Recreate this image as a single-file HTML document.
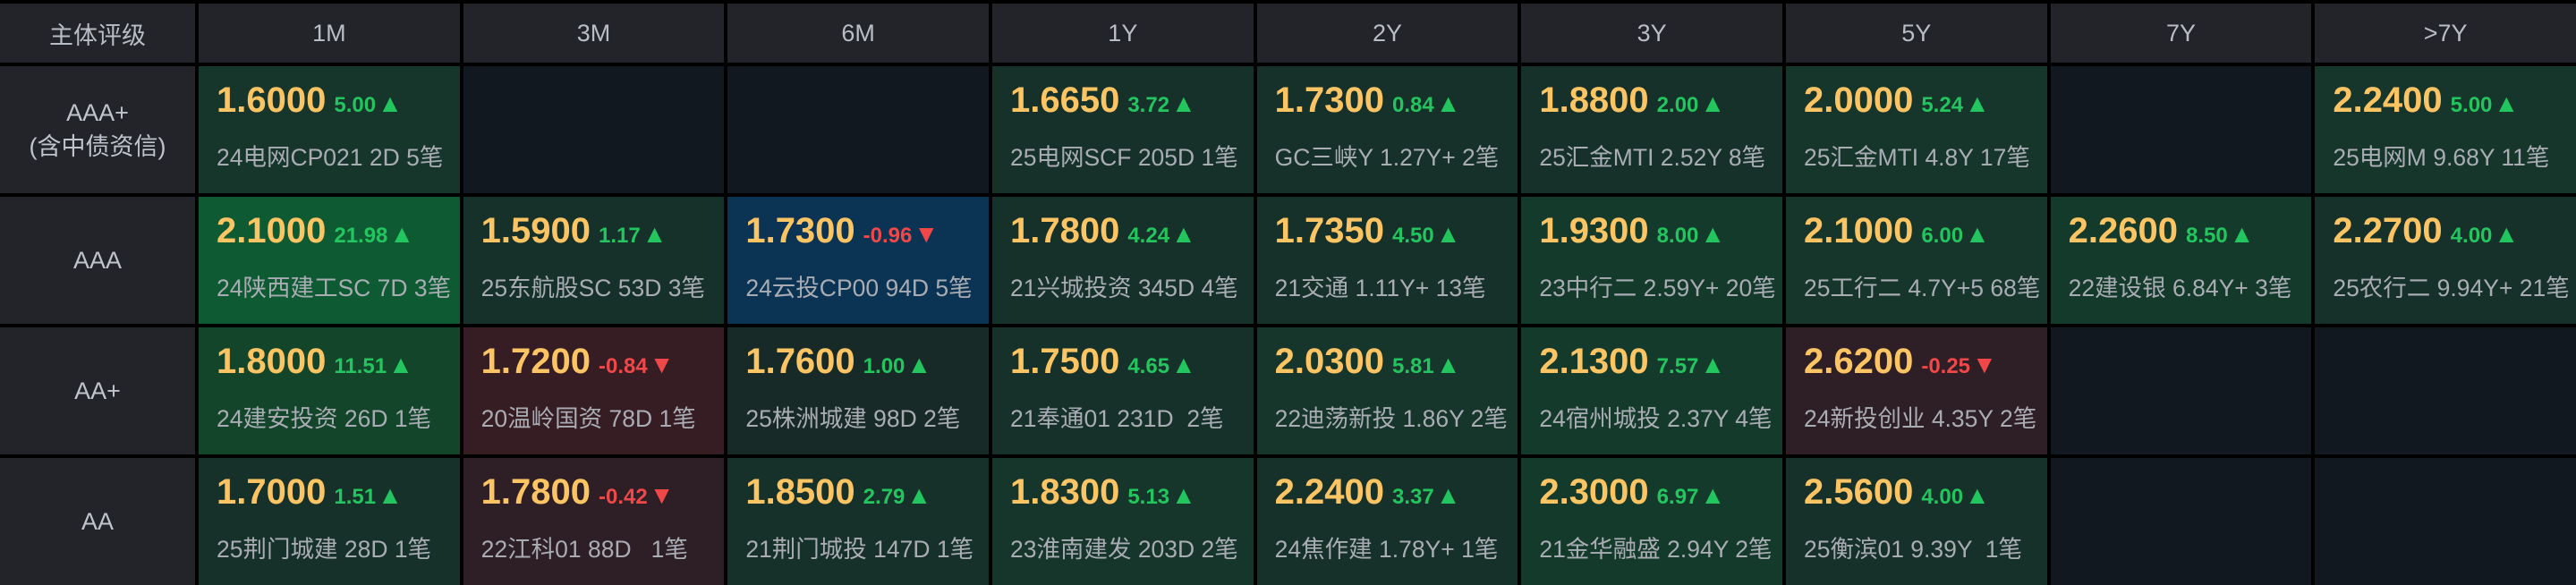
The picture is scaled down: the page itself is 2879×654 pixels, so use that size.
<!DOCTYPE html>
<html><head><meta charset="utf-8"><style>
*{margin:0;padding:0;box-sizing:border-box}
body{width:2879px;height:648px;background:#000;overflow:hidden;font-family:"Liberation Sans","Noto Sans CJK SC",sans-serif}
.g{display:grid;grid-template-columns:218px repeat(9,1fr);grid-template-rows:66px repeat(4,142px);gap:4px;padding-top:4px;width:2879px}
.h{background:#232429;color:#b9bdc5;font-size:27px;display:flex;align-items:center;justify-content:center}
.r{background:#232429;color:#c0c4cc;font-size:27px;display:flex;flex-direction:column;align-items:center;justify-content:center;line-height:38px;text-align:center}
.c{position:relative;background:#16302a;overflow:hidden}
.e{background:#121820}
.p{position:absolute;left:20px;top:18px;line-height:1;font-size:40px;font-weight:bold;color:#fcc463;white-space:nowrap}
.p span{font-size:24px;color:#22c55e;margin-left:9px}
.p span i{font-style:normal;font-size:28px;margin-left:2px}
.p span.d{color:#f04848}
.s{position:absolute;left:20px;top:89px;line-height:1;font-size:26.5px;color:#a9adb3;white-space:nowrap}
.g1{background:#0e5a33}.g2{background:#12452a}.g3{background:#143a2c}.g4{background:#16352b}.g0{background:#182a28}
.b{background:#0b3354}.r1{background:#361d24}.r2{background:#2e1e25}
</style></head><body><div class="g">
<div class="h">主体评级</div><div class="h">1M</div><div class="h">3M</div><div class="h">6M</div><div class="h">1Y</div><div class="h">2Y</div><div class="h">3Y</div><div class="h">5Y</div><div class="h">7Y</div><div class="h">&gt;7Y</div>

<div class="r"><div>AAA+</div><div>(含中债资信)</div></div>
<div class="c g4"><div class="p">1.6000<span>5.00<i>▲</i></span></div><div class="s">24电网CP021 2D 5笔</div></div>
<div class="c e"></div><div class="c e"></div>
<div class="c"><div class="p">1.6650<span>3.72<i>▲</i></span></div><div class="s">25电网SCF 205D 1笔</div></div>
<div class="c"><div class="p">1.7300<span>0.84<i>▲</i></span></div><div class="s">GC三峡Y 1.27Y+ 2笔</div></div>
<div class="c"><div class="p">1.8800<span>2.00<i>▲</i></span></div><div class="s">25汇金MTI 2.52Y 8笔</div></div>
<div class="c g4"><div class="p">2.0000<span>5.24<i>▲</i></span></div><div class="s">25汇金MTI 4.8Y 17笔</div></div>
<div class="c e"></div>
<div class="c g4"><div class="p">2.2400<span>5.00<i>▲</i></span></div><div class="s">25电网M 9.68Y 11笔</div></div>

<div class="r">AAA</div>
<div class="c g1"><div class="p">2.1000<span>21.98<i>▲</i></span></div><div class="s">24陕西建工SC 7D 3笔</div></div>
<div class="c"><div class="p">1.5900<span>1.17<i>▲</i></span></div><div class="s">25东航股SC 53D 3笔</div></div>
<div class="c b"><div class="p">1.7300<span class="d">-0.96<i>▼</i></span></div><div class="s">24云投CP00 94D 5笔</div></div>
<div class="c"><div class="p">1.7800<span>4.24<i>▲</i></span></div><div class="s">21兴城投资 345D 4笔</div></div>
<div class="c"><div class="p">1.7350<span>4.50<i>▲</i></span></div><div class="s">21交通 1.11Y+ 13笔</div></div>
<div class="c g3"><div class="p">1.9300<span>8.00<i>▲</i></span></div><div class="s">23中行二 2.59Y+ 20笔</div></div>
<div class="c g4"><div class="p">2.1000<span>6.00<i>▲</i></span></div><div class="s">25工行二 4.7Y+5 68笔</div></div>
<div class="c g3"><div class="p">2.2600<span>8.50<i>▲</i></span></div><div class="s">22建设银 6.84Y+ 3笔</div></div>
<div class="c"><div class="p">2.2700<span>4.00<i>▲</i></span></div><div class="s">25农行二 9.94Y+ 21笔</div></div>

<div class="r">AA+</div>
<div class="c g2"><div class="p">1.8000<span>11.51<i>▲</i></span></div><div class="s">24建安投资 26D 1笔</div></div>
<div class="c r1"><div class="p">1.7200<span class="d">-0.84<i>▼</i></span></div><div class="s">20温岭国资 78D 1笔</div></div>
<div class="c g0"><div class="p">1.7600<span>1.00<i>▲</i></span></div><div class="s">25株洲城建 98D 2笔</div></div>
<div class="c"><div class="p">1.7500<span>4.65<i>▲</i></span></div><div class="s">21奉通01 231D &nbsp;2笔</div></div>
<div class="c g4"><div class="p">2.0300<span>5.81<i>▲</i></span></div><div class="s">22迪荡新投 1.86Y 2笔</div></div>
<div class="c g3"><div class="p">2.1300<span>7.57<i>▲</i></span></div><div class="s">24宿州城投 2.37Y 4笔</div></div>
<div class="c r2"><div class="p">2.6200<span class="d">-0.25<i>▼</i></span></div><div class="s">24新投创业 4.35Y 2笔</div></div>
<div class="c e"></div><div class="c e"></div>

<div class="r">AA</div>
<div class="c"><div class="p">1.7000<span>1.51<i>▲</i></span></div><div class="s">25荆门城建 28D 1笔</div></div>
<div class="c r2"><div class="p">1.7800<span class="d">-0.42<i>▼</i></span></div><div class="s">22江科01 88D &nbsp;&nbsp;1笔</div></div>
<div class="c"><div class="p">1.8500<span>2.79<i>▲</i></span></div><div class="s">21荆门城投 147D 1笔</div></div>
<div class="c g4"><div class="p">1.8300<span>5.13<i>▲</i></span></div><div class="s">23淮南建发 203D 2笔</div></div>
<div class="c"><div class="p">2.2400<span>3.37<i>▲</i></span></div><div class="s">24焦作建 1.78Y+ 1笔</div></div>
<div class="c g3"><div class="p">2.3000<span>6.97<i>▲</i></span></div><div class="s">21金华融盛 2.94Y 2笔</div></div>
<div class="c"><div class="p">2.5600<span>4.00<i>▲</i></span></div><div class="s">25衡滨01 9.39Y &nbsp;1笔</div></div>
<div class="c e"></div><div class="c e"></div>
</div></body></html>
